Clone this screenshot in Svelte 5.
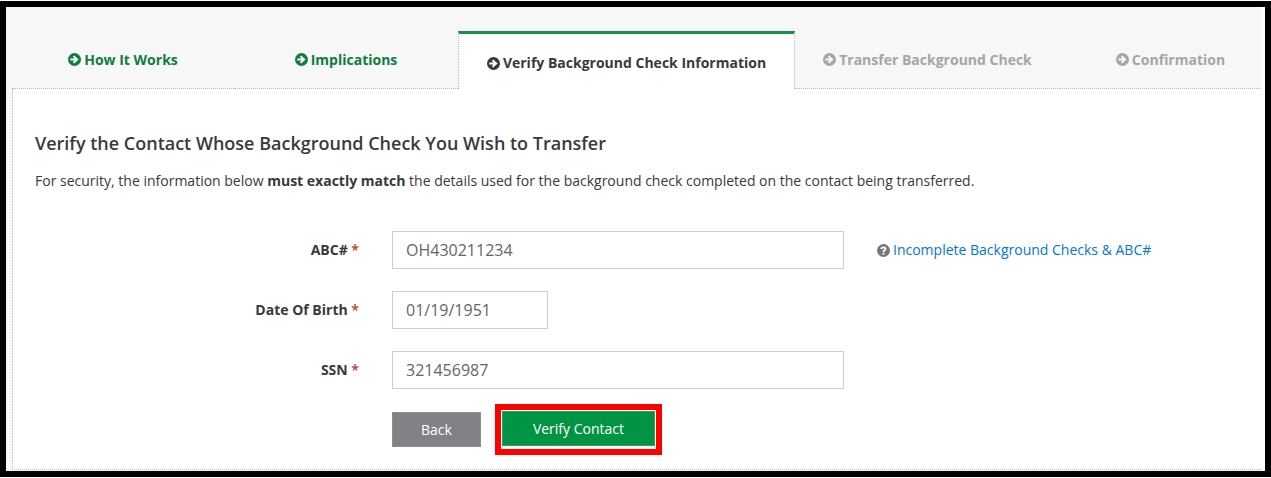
<script>
  const steps = [
    { label: 'How It Works', status: 'done' },
    { label: 'Implications', status: 'done' },
    { label: 'Verify Background Check Information', status: 'active' },
    { label: 'Transfer Background Check', status: 'disabled' },
    { label: 'Confirmation', status: 'disabled' },
  ];

  let abcNumber = $state('OH430211234');
  let birthDate = $state('01/19/1951');
  let ssn = $state('321456987');
</script>

<main class="frame">
  <div class="page">
    <nav class="tabs" aria-label="Transfer steps">
      {#each steps as step}
        <button
          type="button"
          class="tab {step.status}"
          disabled={step.status === 'disabled'}
          aria-current={step.status === 'active' ? 'step' : undefined}
        >
          <svg class="icon" viewBox="0 0 14 14" aria-hidden="true">
            <path
              fill="currentColor"
              fill-rule="evenodd"
              d="M7 0a7 7 0 1 0 0 14A7 7 0 0 0 7 0zM2.5 5.8h4.4L5.2 4.1 6.7 2.6 11.4 7l-4.7 4.4-1.5-1.5 1.7-1.7H2.5z"
            />
          </svg>
          <span>{step.label}</span>
        </button>
      {/each}
    </nav>

    <section class="panel">
      <h1>Verify the Contact Whose Background Check You Wish to Transfer</h1>
      <p class="intro">
        For security, the information below <strong>must exactly match</strong> the details used for the background check completed on the contact being transferred.
      </p>

      <form class="form" onsubmit={(e) => e.preventDefault()}>
        <div class="row">
          <label for="abc">ABC# <span class="required">*</span></label>
          <input id="abc" type="text" bind:value={abcNumber} />
          <a class="help" href="#incomplete">
            <svg class="icon" viewBox="0 0 14 14" aria-hidden="true">
              <circle cx="7" cy="7" r="7" fill="#777" />
              <path d="M4.7 5.4C4.8 3 9.2 3 9.2 5.4 9.2 6.9 7 6.8 7 8.6" fill="none" stroke="#fff" stroke-width="2" />
              <path d="M6 9.5h2v2H6z" fill="#fff" />
            </svg>
            <span>Incomplete Background Checks &amp; ABC#</span>
          </a>
        </div>
        <div class="row">
          <label for="dob">Date Of Birth <span class="required">*</span></label>
          <input id="dob" class="short" type="text" bind:value={birthDate} />
        </div>
        <div class="row">
          <label for="ssn">SSN <span class="required">*</span></label>
          <input id="ssn" type="text" bind:value={ssn} />
        </div>
        <div class="row">
          <div class="actions">
            <button type="button" class="btn back">Back</button>
            <div class="highlight">
              <button type="submit" class="btn verify">Verify Contact</button>
            </div>
          </div>
        </div>
      </form>
    </section>
  </div>
</main>

<style>
  :global(body) {
    margin: 0;
    background: #fff;
  }

  .frame {
    margin: 1px 0;
    border: 6px solid #000;
    padding-right: 4px;
    background: #fff;
    color: #373a3c;
    font-family: 'Open Sans', sans-serif;
    font-size: 14px;
    line-height: 20px;
  }

  .page {
    padding: 24px 0 1px 6px;
    background: #f7f7f7;
  }

  /* Steps */
  .tabs {
    display: grid;
    grid-template-columns: 222fr 224fr 337fr 265fr 201fr;
  }

  .tab {
    display: flex;
    align-items: center;
    justify-content: center;
    gap: 3px;
    height: 58px;
    box-sizing: border-box;
    padding: 0;
    border: 0;
    border-bottom: 1px dotted #bbb;
    background: none;
    font: inherit;
    font-weight: 700;
    white-space: nowrap;
  }

  .tab.done {
    color: #107c41;
    cursor: pointer;
  }

  .tab.disabled {
    color: #a5a5a5;
  }

  .tab.active {
    padding-top: 3px;
    border: 1px dotted #bbb;
    border-top: 3px solid #159447;
    border-bottom: 0;
    background: #fff;
    color: #373a3c;
  }

  .tab:last-child {
    padding-left: 20px;
  }

  .icon {
    width: 13px;
    height: 13px;
    flex-shrink: 0;
  }

  /* Panel */
  .panel {
    padding-top: 42px;
    padding-bottom: 14px;
    border-left: 1px dotted #bbb;
    border-bottom: 1px dotted #bbb;
    background: #fff;
  }

  h1 {
    margin: 0;
    padding: 0 22px;
    font-size: 18px;
    line-height: 24px;
    font-weight: 600;
  }

  .intro {
    margin: 16px 0 0;
    padding: 0 22px;
  }

  .form {
    display: grid;
    gap: 22px;
    margin-top: 40px;
  }

  .row {
    display: grid;
    grid-template-columns: 346fr 452fr 384fr;
    column-gap: 33px;
    align-items: center;
  }

  label {
    text-align: right;
    font-weight: 700;
  }

  .required {
    color: #c0392b;
    font-weight: 600;
  }

  input {
    width: 100%;
    height: 38px;
    box-sizing: border-box;
    padding: 0 13px;
    border: 1px solid #ccc;
    background: #fff;
    color: #666;
    font: inherit;
    font-size: 16px;
  }

  input.short {
    width: 156px;
  }

  .help {
    display: flex;
    align-items: center;
    gap: 3px;
    color: #0275d8;
    text-decoration: none;
    white-space: nowrap;
  }

  .actions {
    grid-column: 2;
    display: flex;
    align-items: center;
    gap: 14px;
    margin-top: -7px;
  }

  .btn {
    display: block;
    height: 35px;
    padding: 0 28px;
    border: 1px solid transparent;
    color: #fff;
    font: inherit;
    cursor: pointer;
  }

  .btn.back {
    border-color: #8d8e92;
    background: #808285;
  }

  .btn.verify {
    padding: 0 30px;
    border-color: #2fa35c;
    background: #009444;
  }

  .highlight {
    padding: 1px 1px 3px;
    border: 6px solid #f00;
  }
</style>
